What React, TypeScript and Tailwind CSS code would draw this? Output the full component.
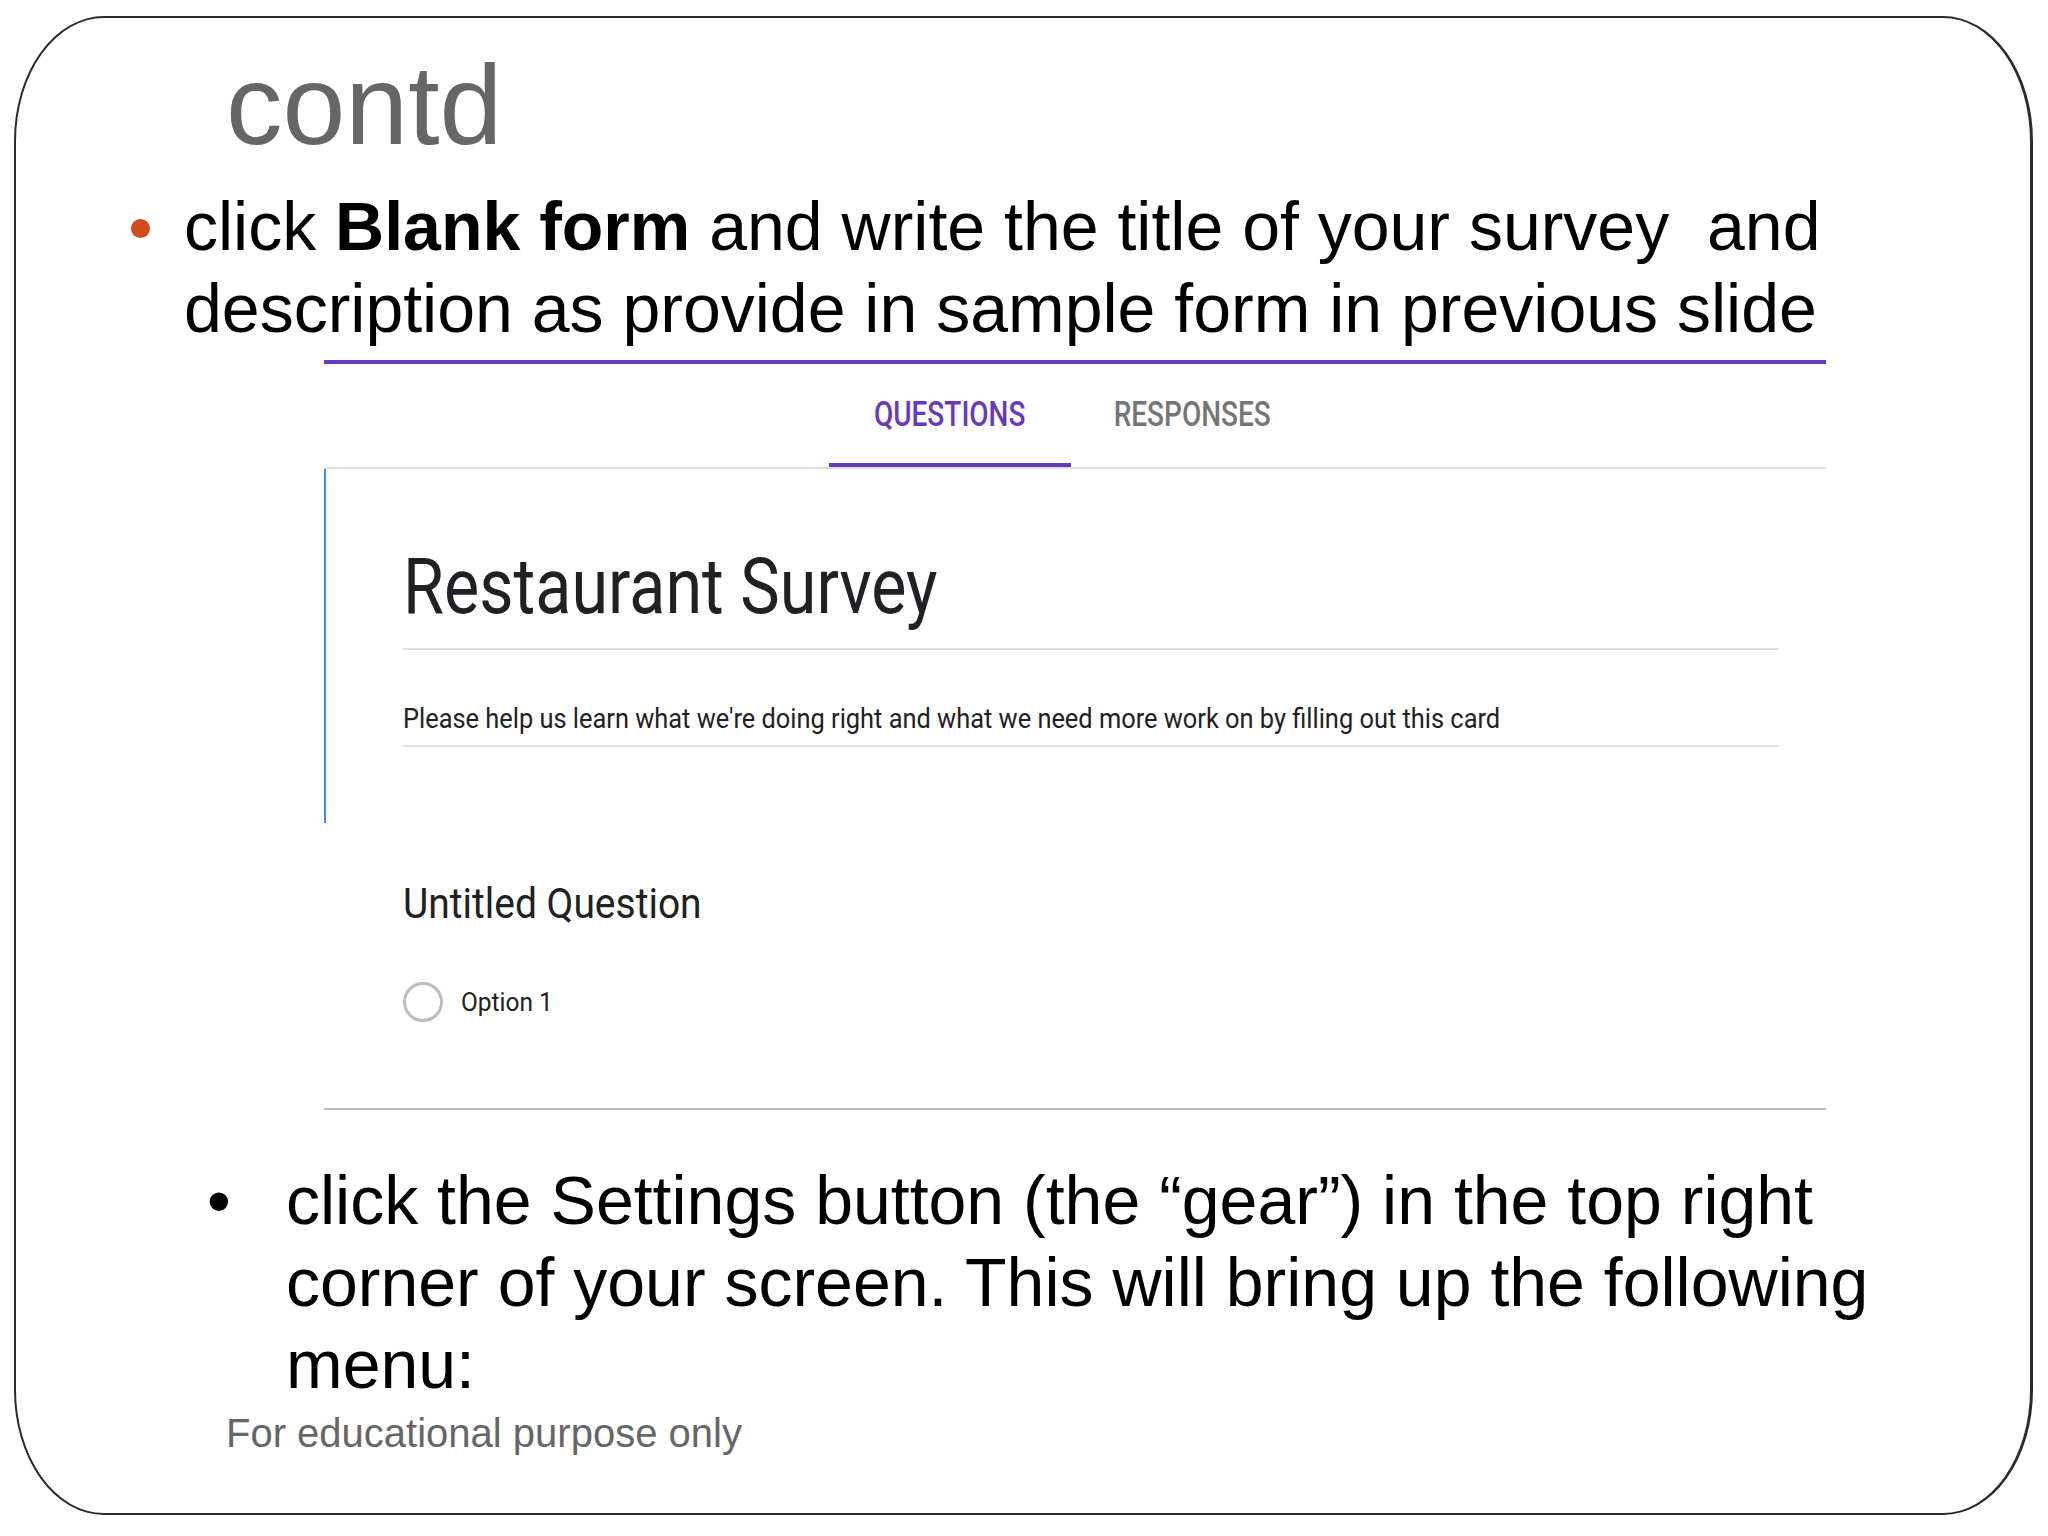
export default function App() {
  return (
    <div className="w-[2048px] h-[1536px] bg-white pl-[14px] pt-[16px] font-['Liberation_Sans',Arial,sans-serif]">
      <div className="w-[2019px] h-[1499px] border-[2px] border-r-[3px] border-[#2b2b2b] rounded-[90px/125px] flex flex-col">
        <h1 className="mt-[31px] pl-[210px] text-[113px] leading-none text-[#666666]">contd</h1>

        <div className="mt-[23px] pl-[115px] flex items-start">
          <span className="mt-[34px] mr-[34px] w-[19px] h-[19px] rounded-full bg-[#d14b1c] shrink-0" />
          <p className="text-[68px] leading-[82px] text-black whitespace-pre">
            click <b>Blank form</b> and write the title of your survey{"  "}and
            <br />
            description as provide in sample form in previous slide
          </p>
        </div>

        <GoogleForm />

        <div className="mt-[49px] pl-[191px] flex items-start">
          <span className="w-[79px] shrink-0 text-[68px] leading-[82px] text-black">•</span>
          <p className="text-[68px] leading-[82px] text-black whitespace-pre">
            click the Settings button (the “gear”) in the top right
            <br />
            corner of your screen. This will bring up the following
            <br />
            menu:
          </p>
        </div>

        <p className="mt-[8px] pl-[210px] text-[40px] leading-none text-[#666666]">For educational purpose only</p>
      </div>
    </div>
  );
}

function GoogleForm() {
  return (
    <div className="mt-[11px] ml-[308px] w-[1502px] bg-[#fefefe] border-t-[4px] border-[#673ab7] font-[Roboto,sans-serif]">
      <div className="h-[103px] pl-[505px] flex">
        <div className="w-[242px] pt-[3px] flex items-center justify-center border-b-[4px] border-[#673ab7]">
          <span className="inline-block scale-x-[0.8] text-[35px] font-medium text-[#673ab7]">QUESTIONS</span>
        </div>
        <div className="w-[242px] pt-[3px] flex items-center justify-center pb-[4px]">
          <span className="inline-block scale-x-[0.8] text-[35px] font-medium text-[#757575]">RESPONSES</span>
        </div>
      </div>
      <div className="h-[2px] bg-[#e0e0e0]" />

      <div className="border-l-[2px] border-[#4285f4] pl-[77px] pt-[79px] pb-[76px]">
        <div className="origin-left scale-x-[0.852] text-[78px] leading-none text-[#202124]">Restaurant Survey</div>
        <div className="mt-[22px] w-[1376px] h-[2px] bg-[#e0e0e0]" />
        <div className="mt-[56px] origin-left scale-x-[0.94] text-[27px] leading-none text-[#212121] whitespace-nowrap">
          Please help us learn what we're doing right and what we need more work on by filling out this card
        </div>
        <div className="mt-[12px] w-[1376px] h-[2px] bg-[#e0e0e0]" />
      </div>

      <div className="pl-[79px] pt-[60px]">
        <div className="origin-left scale-x-[0.928] text-[42px] leading-none text-[#212121]">Untitled Question</div>
        <div className="mt-[57px] flex items-center gap-[18px]">
          <span className="w-[40px] h-[40px] rounded-full border-[3px] border-[#bdbdbd]" />
          <span className="inline-block origin-left scale-x-[0.94] text-[26px] text-[#212121]">Option 1</span>
        </div>
      </div>
      <div className="mt-[86px] h-[2px] bg-[#bdbdbd]" />
    </div>
  );
}
